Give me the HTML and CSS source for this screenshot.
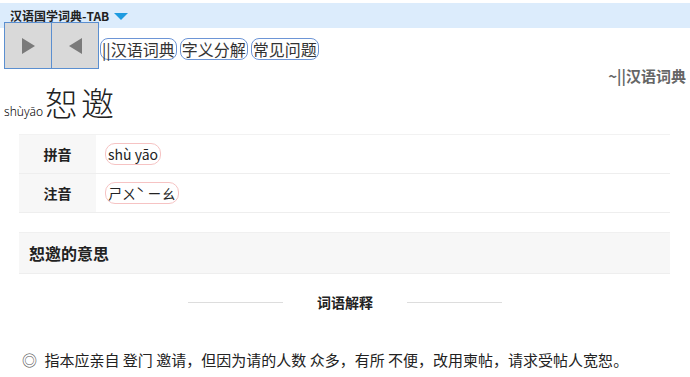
FILE: index.html
```html
<!DOCTYPE html>
<html lang="zh-CN">
<head>
    <meta charset="UTF-8">
    <title>恕邀 - 汉语词典</title>
    <link rel="stylesheet" href="styles.css">
</head>
<body>

<div class="topbar">
    <span class="brand">汉语国学词典-TAB</span>
    <span class="caret"></span>
</div>

<div class="navrow">
    <div class="arrows">
        <button class="arrow"><span class="tri-right"></span></button>
        <button class="arrow"><span class="tri-left"></span></button>
    </div>
    <div class="tabs">
        <a class="tab">||汉语词典</a>
        <a class="tab">字义分解</a>
        <a class="tab">常见问题</a>
    </div>
</div>

<div class="crumb">~||汉语词典</div>

<h1 class="word"><span class="word-py">shùyāo</span>恕邀</h1>

<table class="info">
    <tr>
        <th>拼音</th>
        <td><span class="pill">shù yāo</span></td>
    </tr>
    <tr>
        <th>注音</th>
        <td><span class="pill">ㄕㄨˋ ㄧㄠ</span></td>
    </tr>
</table>

<div class="section-head">恕邀的意思</div>

<div class="divider"><span>词语解释</span></div>

<p class="meaning">
    <span class="mark">◎</span>
    指本应<u>亲自</u> <u>登门</u> <u>邀请</u>，但<u>因为</u>请的<u>人数</u> <u>众多</u>，<u>有所</u> <u>不便</u>，改用柬帖，<u>请求</u>受帖人<u>宽恕</u>。
</p>

</body>
</html>
```

FILE: styles.css
```css
body {
    margin: 0;
    padding-top: 3px;
    font-family: "Noto Sans CJK SC", "Noto Sans", sans-serif;
    color: #222;
    background: #fff;
}
.topbar {
    background-color: #dcecfc;
    height: 25px;
    box-sizing: border-box;
    padding: 0 0 5px 10px;
    display: flex;
    align-items: flex-end;
}
.brand {
    font-size: 12px;
    line-height: 14px;
    font-weight: bold;
    color: #222;
}
.caret {
    width: 0;
    height: 0;
    margin: 0 0 3px 5px;
    border-left: 7px solid transparent;
    border-right: 7px solid transparent;
    border-top: 7px solid #1e9be0;
}
.navrow {
    display: flex;
    align-items: center;
    margin-top: -6px;
    padding-left: 4px;
}
.arrows {
    display: flex;
}
.arrow {
    width: 48px;
    height: 47px;
    margin: 0;
    padding: 0;
    background-color: #d9d9d9;
    border: 1px solid #5b8fd0;
    display: flex;
    align-items: center;
    justify-content: center;
}
.arrow + .arrow {
    margin-left: -1px;
}
.tri-right {
    border-top: 8px solid transparent;
    border-bottom: 8px solid transparent;
    border-left: 13px solid #7a7a7a;
}
.tri-left {
    border-top: 8px solid transparent;
    border-bottom: 8px solid transparent;
    border-right: 13px solid #7a7a7a;
}
.tabs {
    display: flex;
    gap: 3px;
    margin-left: 1px;
    margin-top: 7px;
}
.tab {
    font-size: 16px;
    line-height: 20px;
    color: #333;
    border: 1px solid #6d95d6;
    border-radius: 8px;
    padding: 0 1px;
}
.crumb {
    text-align: right;
    font-size: 15px;
    font-weight: bold;
    color: #666;
    padding-right: 4px;
    margin-top: -4px;
}
.word {
    margin: -4px 0 0 4px;
    font-size: 33px;
    font-weight: 300;
    letter-spacing: 3px;
    font-family: "Noto Sans CJK SC", serif;
    line-height: 40px;
    display: flex;
    align-items: baseline;
}
.word-py {
    font-size: 12px;
    letter-spacing: 0;
    color: #000;
    font-family: "Noto Sans", sans-serif;
    margin-right: 2px;
}
.info {
    margin: 2px 20px 0 19px;
    width: 651px;
    border-collapse: collapse;
    border-top: 1px solid #f2f2f2;
}
.info th {
    width: 77px;
    background: #f7f7f7;
    font-size: 14px;
    font-weight: bold;
    text-align: center;
    height: 38px;
    border-bottom: 1px solid #eeeeee;
    padding: 0;
}
.info td {
    border-bottom: 1px solid #eeeeee;
    padding: 0 0 0 9px;
    font-size: 14px;
}
.pill {
    border: 1px solid #f6c3c3;
    border-radius: 10px;
    padding: 0 2px;
    line-height: 20px;
    display: inline-block;
}
.section-head {
    margin: 19px 20px 0 19px;
    background: #f7f7f7;
    border-top: 1px solid #f0f0f0;
    border-bottom: 1px solid #eeeeee;
    height: 40px;
    line-height: 40px;
    padding-left: 10px;
    font-size: 16px;
    font-weight: bold;
}
.divider {
    display: flex;
    justify-content: center;
    align-items: center;
    margin-top: 18px;
    font-size: 14px;
    font-weight: bold;
}
.divider::before,
.divider::after {
    content: "";
    width: 95px;
    height: 1px;
    background: #dddddd;
}
.divider span {
    margin: 0 34px;
}
.meaning {
    margin: 37px 0 0 22px;
    font-size: 15px;
    color: #222;
}
.mark {
    color: #555;
    margin-right: 4px;
}
.meaning u {
    text-decoration: none;
    border-bottom: 1px solid #ddd;
}
```
